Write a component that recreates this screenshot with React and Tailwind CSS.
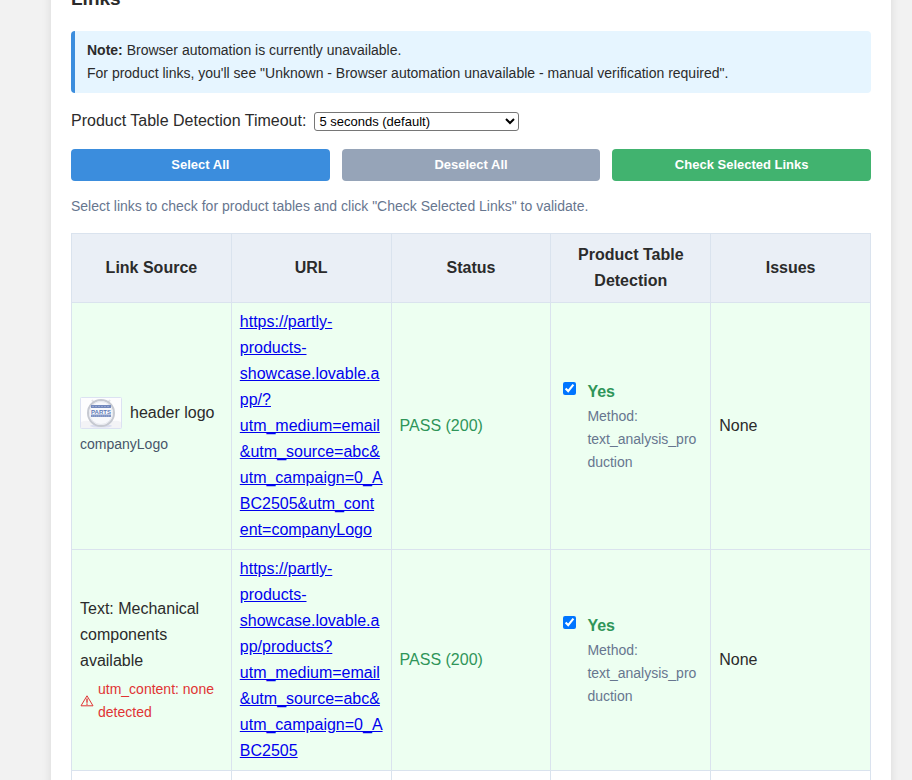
import React from "react";

const links = [
  {
    id: "company-logo",
    source: "header logo",
    content: "companyLogo",
    hasImage: true,
    url: "https://partly-products-showcase.lovable.app/?utm_medium=email&utm_source=abc&utm_campaign=0_ABC2505&utm_content=companyLogo",
  },
  {
    id: "mechanical",
    source: "Text: Mechanical components available",
    hasImage: false,
    url: "https://partly-products-showcase.lovable.app/products?utm_medium=email&utm_source=abc&utm_campaign=0_ABC2505",
  },
];

const cell = "border border-[#dae3ee] px-2 py-1.5 align-middle";

function LogoThumb() {
  return (
    <svg viewBox="0 0 42 32" className="h-8 w-[42px] shrink-0" role="img" aria-label="Company logo">
      <rect x="0.5" y="0.5" width="41" height="31" rx="1" fill="#fdfdfe" stroke="#dce2f2" />
      <path d="M1 25 Q8 22 14 26 H28 Q35 22 41 25 V31 H1Z" fill="#f3f3f6" />
      <ellipse cx="21" cy="29" rx="11" ry="1.6" fill="#dcdff0" />
      <path d="M12 3l3 4M30 3l-3 4" stroke="#e3e4e7" strokeWidth="2" />
      <circle cx="21" cy="16" r="13" fill="#f8f9fc" stroke="#c6c9d1" strokeWidth="2" />
      <circle cx="21" cy="16" r="11.5" fill="none" stroke="#e6e8ef" />
      <rect x="11" y="8" width="20" height="3" fill="#7389bd" />
      <path d="M12 9.5h18" stroke="#93a5cf" strokeDasharray="2 1" />
      <text x="21" y="17" textAnchor="middle" fontSize="6" fontWeight="700" fill="#5f7ab6">
        PARTS
      </text>
      <rect x="11" y="17.5" width="20" height="2.5" fill="#7f93c3" />
      <path d="M12 19h18" stroke="#9dadd3" strokeDasharray="1 1" />
    </svg>
  );
}

function WarningIcon() {
  return (
    <svg viewBox="0 0 14 12" className="h-3 w-3.5 shrink-0" fill="none" stroke="#e03434" aria-hidden="true">
      <path d="M7 0.8 L13 10.8 H1 Z" strokeLinejoin="round" />
      <path d="M7 3.6 V7.8 M7 8.6 V9.8" strokeWidth="1.4" />
    </svg>
  );
}

function LinkRow({ link }) {
  return (
    <tr className="bg-[#edfff1]">
      <td className={cell}>
        {link.hasImage ? (
          <div className="flex items-center gap-2">
            <LogoThumb />
            <span>{link.source}</span>
          </div>
        ) : (
          <div>{link.source}</div>
        )}
        {link.content ? (
          <div className="mt-1 text-sm leading-[23px] text-[#475569]">{link.content}</div>
        ) : (
          <div className="mt-1 flex items-center gap-1 text-sm leading-[23px] text-[#e03434]">
            <WarningIcon />
            <span>utm_content: none detected</span>
          </div>
        )}
      </td>
      <td className={cell}>
        <a href={link.url} className="break-words text-[#0000ee] underline">
          {link.url}
        </a>
      </td>
      <td className={`${cell} text-[#2f9559]`}>PASS (200)</td>
      <td className={cell}>
        <div className="flex items-start">
          <input
            id={link.id}
            type="checkbox"
            defaultChecked
            className="mx-1 mt-[3px] h-[13px] w-[13px] shrink-0 accent-[#0075ff]"
          />
          <label htmlFor={link.id} className="ml-[7px] min-w-0 flex-1">
            <span className="block font-bold text-[#2f9559]">Yes</span>
            <span className="block break-words text-sm leading-[23px] text-[#67768f]">
              Method:
              <br />
              text_analysis_production
            </span>
          </label>
        </div>
      </td>
      <td className={cell}>None</td>
    </tr>
  );
}

export default function App() {
  const button = "flex-1 rounded h-8 text-[13px] font-bold text-white";
  return (
    <div className="h-screen overflow-hidden bg-[#f2f2f2] pl-[51px] pr-[21px] font-['Liberation_Sans',Arial,sans-serif] text-base leading-[26px] text-[#2b2b2b]">
      <main className="min-h-screen bg-white px-5 shadow-[0_0_10px_rgba(0,0,0,0.1)]">
        <h3 className="-mt-4 mb-[17px] text-[19px] font-bold leading-[30px]">Links</h3>

        <div className="rounded border-l-4 border-[#3b8ddd] bg-[#e6f5ff] px-3 py-2 text-sm leading-[23px]">
          <strong>Note:</strong> Browser automation is currently unavailable.
          <br />
          For product links, you'll see "Unknown - Browser automation unavailable - manual verification required".
        </div>

        <div className="my-4 flex h-6 items-center gap-2">
          <label htmlFor="timeout">Product Table Detection Timeout:</label>
          <select
            id="timeout"
            className="h-[19px] w-[205px] rounded-[3px] border border-[#767676] bg-white text-[13px] leading-4 text-black"
          >
            <option>5 seconds (default)</option>
            <option>10 seconds</option>
            <option>15 seconds</option>
          </select>
        </div>

        <div className="flex gap-3">
          <button type="button" className={`${button} bg-[#3b8ddd]`}>Select All</button>
          <button type="button" className={`${button} bg-[#96a4b8]`}>Deselect All</button>
          <button type="button" className={`${button} bg-[#41b36f]`}>Check Selected Links</button>
        </div>

        <p className="mt-3 mb-3.5 text-sm leading-[26px] text-[#67768f]">
          Select links to check for product tables and click "Check Selected Links" to validate.
        </p>

        <table className="w-full table-fixed border-collapse">
          <thead>
            <tr className="bg-[#eaeff6]">
              {["Link Source", "URL", "Status", "Product Table Detection", "Issues"].map((name) => (
                <th key={name} className="border border-[#dae3ee] p-2 text-center font-bold">
                  {name}
                </th>
              ))}
            </tr>
          </thead>
          <tbody>
            {links.map((link) => (
              <LinkRow key={link.id} link={link} />
            ))}
            <tr className="h-16">
              <td className={cell} />
              <td className={cell} />
              <td className={cell} />
              <td className={cell} />
              <td className={cell} />
            </tr>
          </tbody>
        </table>
      </main>
    </div>
  );
}
